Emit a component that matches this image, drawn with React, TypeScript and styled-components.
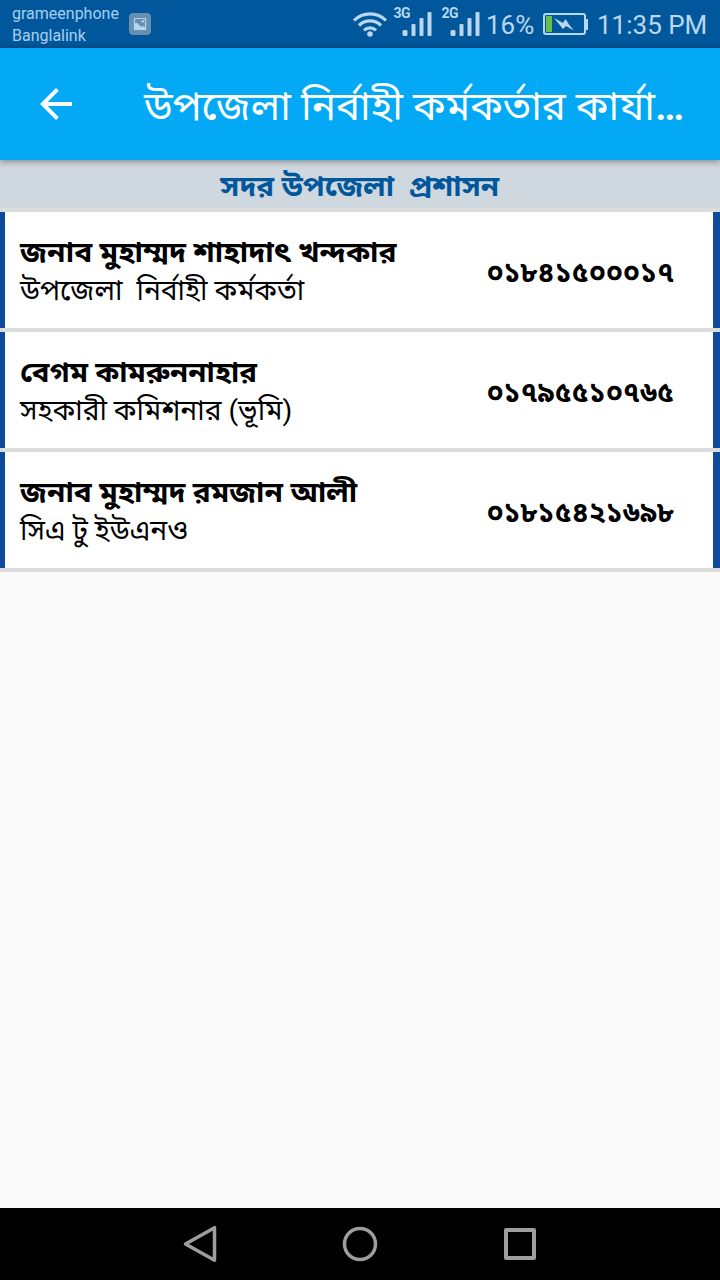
import React from 'react';
import styled, { createGlobalStyle } from 'styled-components';

const colors = {
  status: '#01579b',
  statusText: '#b9d7f0',
  bar: '#03a9f4',
  heading: '#cfd8df',
  divider: '#dcdcdc',
  side: '#0d4a9c',
};

const GlobalStyle = createGlobalStyle`
  * { box-sizing: border-box; }
  body { margin: 0; background: #fafafa; font-family: Roboto, "Noto Sans Bengali", "Noto Sans", sans-serif; }
`;

const Screen = styled.div`
  width: 720px;
  height: 1280px;
  display: flex;
  flex-direction: column;
  overflow: hidden;
  background: #fafafa;
`;

const StatusBar = styled.div`
  height: 48px;
  flex: none;
  display: flex;
  align-items: center;
  padding: 0 12px;
  background: linear-gradient(${colors.status} 43px, #014f8d 48px);
  color: ${colors.statusText};
`;

const Carriers = styled.div`
  font-size: 16px;
  line-height: 22px;
  width: 116px;
  padding-top: 2px;
  color: #a5d0f1;
`;

const StatusIcons = styled.div`
  margin-left: auto;
  display: flex;
  align-items: center;
`;

const Signal = styled.svg<{ $gap: number }>`
  display: block;
  margin-left: ${(p) => p.$gap}px;
`;

const StatusText = styled.span<{ $gap: number; $width: number }>`
  font-size: 26px;
  line-height: 48px;
  width: ${(p) => p.$width}px;
  margin-left: ${(p) => p.$gap}px;
  padding-top: 2px;
  white-space: nowrap;
`;

const AppBar = styled.header`
  height: 112px;
  flex: none;
  display: flex;
  align-items: center;
  padding-left: 32px;
  background: ${colors.bar};
  color: #fff;
  z-index: 1;
  box-shadow: 0 2px 6px rgba(0, 0, 0, 0.35);
`;

const BackButton = styled.button`
  display: flex;
  padding: 0;
  border: 0;
  background: none;
  color: inherit;
`;

const Title = styled.h1`
  margin: 0 0 0 64px;
  padding-top: 6px;
  font-size: 40.3px;
  font-weight: 400;
  line-height: 56px;
  white-space: nowrap;
`;

const Ellipsis = styled.span`
  font-weight: 600;
`;

const SectionTitle = styled.h2`
  margin: 0;
  height: 52px;
  flex: none;
  display: flex;
  justify-content: center;
  padding-top: 5px;
  font-size: 28px;
  font-weight: 700;
  line-height: 44px;
  white-space: pre;
  color: ${colors.status};
  background: ${colors.heading};
  border-bottom: 4px solid ${colors.divider};
`;

const WideText = styled.span<{ $origin: string; $stretch: number }>`
  display: block;
  transform: scaleX(${(p) => p.$stretch});
  transform-origin: ${(p) => p.$origin} center;
`;

const ContactRow = styled.div`
  height: 120px;
  flex: none;
  display: flex;
  padding: 0 7px 0 5px;
  background: ${colors.side};
  border-bottom: 4px solid ${colors.divider};
`;

const Card = styled.div`
  flex: 1;
  display: flex;
  align-items: center;
  padding: 4px 39px 0 15px;
  background: #fff;
  color: #000;
`;

const Person = styled.div`
  flex: 1;
  font-size: 28.1px;
  line-height: 38px;
  white-space: pre;
`;

const Name = styled.div`
  width: max-content;
  font-weight: 700;
`;

const Phone = styled.div`
  padding-top: 5px;
  font-size: 28px;
  font-weight: 700;
`;

const Spacer = styled.div`
  flex: 1;
`;

const NavBar = styled.nav`
  height: 72px;
  flex: none;
  display: flex;
  justify-content: center;
  align-items: center;
  gap: 120px;
  background: #000;
`;

const contacts = [
  { name: 'জনাব মুহাম্মদ শাহাদাৎ খন্দকার', role: 'উপজেলা  নির্বাহী কর্মকর্তা', phone: '০১৮৪১৫০০০১৭', stretch: 1.065 },
  { name: 'বেগম কামরুননাহার', role: 'সহকারী কমিশনার (ভূমি)', phone: '০১৭৯৫৫১০৭৬৫', stretch: 1.047 },
  { name: 'জনাব মুহাম্মদ রমজান আলী', role: 'সিএ টু ইউএনও', phone: '০১৮১৫৪২১৬৯৮', stretch: 1.06 },
];

function SignalIcon({ label, gap }: { label: string; gap: number }) {
  return (
    <Signal $gap={gap} width="40" height="48" viewBox="0 0 40 48" fill={colors.statusText}>
      <text x="0.500" y="18" fontSize="14" fontWeight="700" textLength="17" lengthAdjust="spacing">{label}</text>
      <rect x="9.500" y="30" width="5" height="6" rx="1.500" />
      <rect x="18.500" y="24" width="4" height="12" rx="1" />
      <rect x="26.500" y="18" width="4" height="18" rx="1" />
      <rect x="34.500" y="12" width="4" height="24" rx="1" />
    </Signal>
  );
}

export default function App() {
  return (
    <Screen>
      <GlobalStyle />
      <StatusBar>
        <Carriers>
          <div>grameenphone</div>
          <div>Banglalink</div>
        </Carriers>
        <svg width="24" height="24" viewBox="0 0 24 24">
          <rect x="1" y="1" width="22" height="22" rx="4" fill="#668fb1" />
          <path d="M6.500 6.500h11v11h-11z" fill="none" stroke="#b3d6ef" strokeWidth="1.200" />
          <path d="M6 12.500l2.500-2 5 4.500 1.500-1 3 2.500v1.500H6z" fill="#b3d6ef" />
          <circle cx="14.800" cy="9.300" r="1.200" fill="#b3d6ef" />
        </svg>
        <StatusIcons>
          <svg width="36" height="48" viewBox="0 0 36 48" fill="none" stroke={colors.statusText} strokeWidth="3.200">
            <path d="M2 20.500a22.500 22.500 0 0 1 32 0M7 25.500a15.500 15.500 0 0 1 22 0M12 30.300a8.700 8.700 0 0 1 12 0" />
            <circle cx="18" cy="34" r="2.800" fill={colors.statusText} stroke="none" />
          </svg>
          <SignalIcon label="3G" gap={5} />
          <SignalIcon label="2G" gap={8} />
          <StatusText $gap={5} $width={57}>16%</StatusText>
          <svg width="46" height="24" viewBox="0 0 46 24">
            <rect x="1" y="2" width="41" height="20" rx="2" fill="none" stroke={colors.statusText} strokeWidth="2" />
            <rect x="42.500" y="7" width="2.500" height="11" fill={colors.statusText} />
            <rect x="3" y="4" width="6" height="16" fill="#6abf4b" />
            <path d="M11 6l9 5 2.500-4 3.500 5.500 5 6-8-4.500-3 3z" fill={colors.statusText} />
          </svg>
          <StatusText $gap={8} $width={111}>11:35 PM</StatusText>
        </StatusIcons>
      </StatusBar>
      <AppBar>
        <BackButton aria-label="Back">
          <svg width="48" height="48" viewBox="0 0 24 24" fill="currentColor">
            <path d="M20 11H7.830l5.590-5.590L12 4l-8 8 8 8 1.410-1.410L7.830 13H20z" />
          </svg>
        </BackButton>
        <Title>উপজেলা নির্বাহী কর্মকর্তার কার্যা<Ellipsis>…</Ellipsis></Title>
      </AppBar>
      <SectionTitle>
        <WideText $origin="center" $stretch={1.058}>সদর উপজেলা  প্রশাসন</WideText>
      </SectionTitle>
      {contacts.map((c) => (
        <ContactRow key={c.phone}>
          <Card>
            <Person>
              <Name>
                <WideText $origin="left" $stretch={c.stretch}>{c.name}</WideText>
              </Name>
              <div>{c.role}</div>
            </Person>
            <Phone>{c.phone}</Phone>
          </Card>
        </ContactRow>
      ))}
      <Spacer />
      <NavBar>
        <svg width="40" height="40" viewBox="0 0 40 40" fill="none" stroke="#9e9e9e" strokeWidth="3.500" strokeLinejoin="round">
          <path d="M34.500 3.700v32.600L5.500 20z" />
        </svg>
        <svg width="40" height="40" viewBox="0 0 40 40" fill="none" stroke="#9e9e9e" strokeWidth="3.500">
          <circle cx="20" cy="20" r="15.500" />
        </svg>
        <svg width="40" height="40" viewBox="0 0 40 40" fill="none" stroke="#9e9e9e" strokeWidth="4" strokeLinejoin="round">
          <rect x="6" y="6" width="28" height="28" />
        </svg>
      </NavBar>
    </Screen>
  );
}
